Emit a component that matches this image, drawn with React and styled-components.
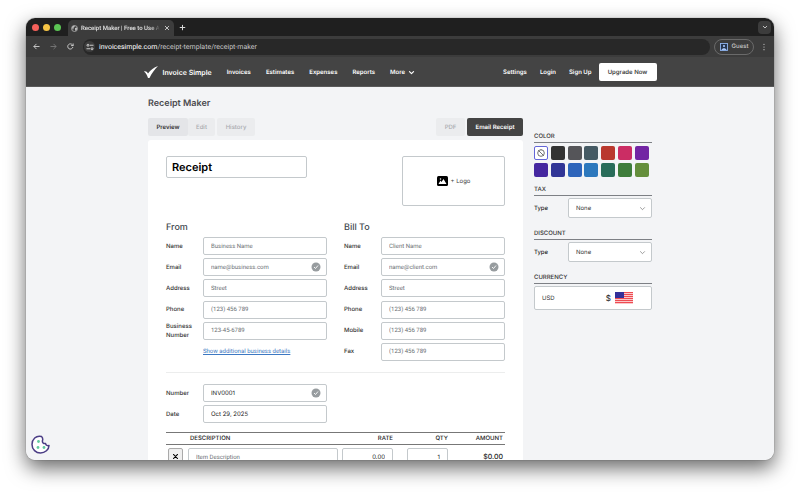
import React from "react";
import styled, { createGlobalStyle } from "styled-components";

const GlobalStyle = createGlobalStyle`
  *, *::before, *::after { box-sizing: border-box; }
  html, body { margin: 0; background: #fff; }
  body, button, input, select {
    font-family: Inter, "Liberation Sans", sans-serif;
    font-size: 6px;
    text-rendering: geometricPrecision;
  }
  button, input, select { margin: 0; padding: 0; }
  button { cursor: pointer; }
`;

const Desktop = styled.div`
  height: 100vh;
  padding: 18px 26px 34px;
  overflow: hidden;
`;

const BrowserWindow = styled.div`
  position: relative;
  height: 100%;
  display: flex;
  flex-direction: column;
  border-radius: 9px;
  box-shadow: 0 0 1px rgba(0, 0, 0, 0.7), 0 8px 20px rgba(0, 0, 0, 0.6);
`;

const Clip = styled.div`
  flex: 1;
  min-height: 0;
  display: flex;
  flex-direction: column;
  overflow: hidden;
  border-radius: 9px;
  background: #f3f4f6;
`;

const TabStrip = styled.div`
  display: flex;
  align-items: center;
  flex: none;
  height: 18px;
  padding: 0 3px 0 6px;
  background: #1f1f1f;
`;

const Lights = styled.div`
  display: flex;
  gap: 4px;
  margin-right: 7px;
`;

const Light = styled.span`
  width: 7px;
  height: 7px;
  border-radius: 50%;
  background: ${(p) => p.$color};
`;

const BrowserTab = styled.div`
  display: flex;
  align-items: center;
  align-self: flex-end;
  gap: 3px;
  width: 106px;
  height: 16px;
  padding: 0 3px;
  border-radius: 5px 5px 0 0;
  background: #3c3c3c;
  color: #e3e3e3;
`;

const TabTitle = styled.span`
  flex: 1;
  min-width: 0;
  overflow: hidden;
  white-space: nowrap;
  font-family: Roboto, sans-serif;
  font-weight: 500;
  mask-image: linear-gradient(to right, #000 88%, transparent);
`;

const ChromeButton = styled.button`
  display: flex;
  align-items: center;
  justify-content: center;
  flex: none;
  width: ${(p) => p.$size || 8}px;
  height: ${(p) => p.$size || 8}px;
  border: 0;
  border-radius: 4px;
  background: ${(p) => p.$fill || "transparent"};
  color: ${(p) => (p.$dim ? "#7a7a7a" : "#d6d6d6")};
`;

const NewTab = styled(ChromeButton)`
  margin: 0 auto 0 4px;
`;

const Toolbar = styled.div`
  display: flex;
  align-items: center;
  flex: none;
  gap: 9px;
  height: 21px;
  padding: 0 6px;
  background: #3c3c3c;
`;

const AddressBar = styled.label`
  flex: 1;
  display: flex;
  align-items: center;
  gap: 4px;
  height: 16px;
  padding: 0 1px;
  margin-right: -5px;
  border-radius: 8px;
  background: #282828;
  color: #e3e3e3;
`;

const SiteInfo = styled.span`
  display: flex;
  align-items: center;
  justify-content: center;
  width: 11px;
  height: 11px;
  border-radius: 50%;
  background: #3c3c3c;
`;

const Url = styled.span`
  font-family: Roboto, sans-serif;
  font-size: 7px;
  line-height: 10px;
  color: #c7c7c7;
  b { font-weight: 400; color: #fff; }
`;

const Guest = styled.button`
  display: flex;
  align-items: center;
  justify-content: center;
  gap: 4px;
  width: 40px;
  height: 16px;
  margin-right: -3px;
  border: 1px solid #6a6a6a;
  border-radius: 8px;
  background: transparent;
  color: #c7c7c7;
  font-weight: 500;
`;

const NavBar = styled.nav`
  flex: none;
  background: #444;
  border-bottom: 1px solid #5a5a5a;
`;

const NavInner = styled.div`
  display: flex;
  align-items: center;
  gap: 15px;
  width: 100%;
  max-width: 513px;
  height: 30px;
  margin: 0 auto -1px;
`;

const NavLink = styled.a`
  display: flex;
  align-items: center;
  gap: ${(p) => (p.$brand ? 5 : 3)}px;
  white-space: nowrap;
  text-decoration: none;
  font-weight: 600;
  font-size: ${(p) => (p.$brand ? 7 : 6)}px;
  color: #fff;
`;

const AccountLinks = styled.div`
  display: flex;
  align-items: center;
  gap: 13px;
  margin-left: auto;
`;

const Upgrade = styled.button`
  height: 18px;
  width: 58px;
  margin-left: -6px;
  border: 0;
  border-radius: 2px;
  background: #fff;
  color: #444;
  font-weight: 600;
`;

const Page = styled.main`
  display: grid;
  grid-template-columns: minmax(0, 1fr) 118px;
  column-gap: 11px;
  flex: 1;
  min-height: 0;
  width: 100%;
  max-width: 504px;
  margin: 0 auto;
  padding-top: 10px;
`;

const PageTitle = styled.h1`
  margin: 0 0 7px;
  font-size: 9px;
  line-height: 14px;
  font-weight: 600;
  color: #4b4b4f;
`;

const Actions = styled.div`
  display: flex;
  gap: 2px;
  margin-bottom: 4px;
`;

const Segments = styled.div`
  display: flex;
  margin-right: ${(p) => (p.$push ? "auto" : "0")};
`;

const Segment = styled.button`
  height: 18px;
  width: ${(p) => p.$w}px;
  border: 0;
  border-radius: 2px;
  background: ${(p) => (p.$tone === "dark" ? "#444" : p.$tone === "active" ? "#e4e5e8" : "#ebecee")};
  color: ${(p) => (p.$tone === "dark" ? "#fff" : p.$tone === "active" ? "#333" : "#a9abae")};
  font-weight: ${(p) => (p.$tone ? 600 : 500)};
`;

const Paper = styled.section`
  padding: 16px 18px;
  border-radius: 3px;
  background: #fff;
`;

const PaperTop = styled.div`
  display: flex;
  justify-content: space-between;
  align-items: flex-start;
  margin-bottom: 14px;
`;

const TextBox = styled.input`
  width: 100%;
  height: 18px;
  padding: 0 7px;
  border: 1px solid #c4c9cc;
  border-radius: 2px;
  background: #fff;
  color: #222;
  text-align: ${(p) => (p.$right ? "right" : "left")};
  &::placeholder { font-family: Roboto, sans-serif; color: #6b6f74; opacity: 1; }
`;

const TitleBox = styled(TextBox)`
  width: 141px;
  height: 22px;
  padding: 0 5px;
  font-size: 11px;
  font-weight: 600;
  color: #000;
`;

const LogoDrop = styled.button`
  display: flex;
  align-items: center;
  justify-content: center;
  gap: 3px;
  width: 103px;
  height: 50px;
  border: 1px solid #c4c9cc;
  border-radius: 2px;
  background: #fff;
  color: #444;
`;

const Columns = styled.div`
  display: grid;
  grid-template-columns: 1fr 1fr;
  column-gap: 17px;
`;

const GroupTitle = styled.h2`
  margin: 0 0 1px;
  font-size: 9px;
  line-height: 16px;
  font-weight: 500;
  color: #444a50;
`;

const FieldList = styled.div`
  display: grid;
  align-content: space-between;
  min-height: ${(p) => (p.$rows === 2 ? 39 : 124)}px;
`;

const FieldRow = styled.div`
  display: grid;
  grid-template-columns: 37px minmax(0, 1fr);
  align-items: center;
  min-height: 18px;
`;

const FieldLabel = styled.label`
  font-weight: 500;
  line-height: 9px;
  color: #333;
`;

const Overlap = styled.span`
  display: grid;
  align-items: center;
  > * { grid-area: 1 / 1; }
  > svg { justify-self: end; margin-right: 6px; pointer-events: none; }
`;

const MoreLink = styled.a`
  grid-column: 2;
  font-family: Roboto, sans-serif;
  color: #3d78c2;
  text-decoration: underline;
`;

const Divider = styled.hr`
  margin: 11px 0;
  border: 0;
  border-top: 1px solid #eceded;
`;

const Items = styled.table`
  width: 100%;
  margin-top: 9px;
  table-layout: fixed;
  border-collapse: collapse;
  th {
    height: 12px;
    padding: 0 2px;
    border-top: 1px solid #777;
    border-bottom: 1px solid #777;
    font-weight: 500;
    text-align: right;
    color: #222;
  }
  th:nth-child(2) { padding-left: 4px; text-align: left; }
  td { padding: 3px 2px 0; text-align: right; vertical-align: top; }
`;

const Col = styled.col`
  width: ${(p) => p.$w}px;
`;

const RemoveButton = styled.button`
  display: flex;
  align-items: center;
  justify-content: center;
  width: 15px;
  height: 16px;
  border: 1px solid #aaa;
  border-radius: 2px;
  background: #efefef;
`;

const QtyCell = styled.td`
  && { padding-left: 12px; }
`;

const Amount = styled.output`
  font-size: 7px;
  line-height: 18px;
  font-weight: 500;
  color: #222;
`;

const Sidebar = styled.aside`
  padding-top: 35px;
`;

const Panel = styled.section`
  margin-bottom: 8px;
`;

const PanelTitle = styled.h3`
  margin: 0 0 2px;
  height: 11px;
  border-bottom: 1px solid #7d8085;
  font-size: 6px;
  line-height: 10px;
  font-weight: 500;
  color: #333;
`;

const Swatches = styled.div`
  display: grid;
  grid-template-columns: repeat(7, 14px);
  justify-content: space-between;
  row-gap: 3px;
  padding: 1px 3px 0 0;
`;

const Swatch = styled.button`
  display: flex;
  align-items: center;
  justify-content: center;
  height: 14px;
  border: ${(p) => (p.$color ? "0" : "1px solid #6366d8")};
  border-radius: 2px;
  background: ${(p) => p.$color || "#fff"};
`;

const TypeRow = styled.div`
  display: grid;
  grid-template-columns: 34px minmax(0, 1fr);
  align-items: center;
  margin-bottom: 11px;
`;

const Picker = styled.select`
  appearance: none;
  width: 100%;
  height: 20px;
  padding: 0 7px;
  border: 1px solid #c4c9cc;
  border-radius: 2px;
  background: #fff;
  color: #333;
`;

const Currency = styled.button`
  display: flex;
  align-items: center;
  width: 100%;
  height: 24px;
  padding: 0 18px 0 7px;
  border: 1px solid #c4c9cc;
  border-radius: 2px;
  background: #fff;
  color: #333;
  svg { margin-left: 4px; }
`;

const Symbol = styled.span`
  margin-left: auto;
  font-size: 8px;
  font-weight: 500;
`;

const CookieButton = styled.button`
  position: absolute;
  left: 5px;
  bottom: 6px;
  width: 19px;
  height: 19px;
  border: 0;
  background: transparent;
`;

const Stroke = ({ size = 7, box = 24, w = 2.5, d, ...rest }) => (
  <svg width={size} height={size} viewBox={`0 0 ${box} ${box}`} fill="none" stroke="currentColor" strokeWidth={w} strokeLinecap="round" strokeLinejoin="round" aria-hidden="true" {...rest}>
    <path d={d} />
  </svg>
);

const Globe = () => (
  <svg width="7" height="7" viewBox="0 0 14 14" aria-hidden="true">
    <circle cx="7" cy="7" r="6" fill="none" stroke="#bbb" strokeWidth="1.5" />
    <path d="M2 4c2-3 5-3 6-2L6 5 4 6 6 8 3 9ZM8 6l4-1v4l-3 3-1-3Z" fill="#bbb" />
  </svg>
);

const Tune = () => (
  <svg width="8" height="8" viewBox="0 0 16 16" fill="none" stroke="#e3e3e3" strokeWidth="1.7" aria-hidden="true">
    <circle cx="4" cy="4.5" r="2" />
    <path d="M8 4.5h7M1 11.5h7" />
    <circle cx="12" cy="11.5" r="2" />
  </svg>
);

const CheckLogo = () => (
  <svg width="14" height="12" viewBox="0 0 28 24" aria-hidden="true">
    <path d="M0 11c3-1 6 0 8 4C13 8 20 3 28 0 21 7 15 15 11 24H8C6 18 4 14 0 11Z" fill="#fff" />
  </svg>
);

const CheckBadge = () => (
  <svg width="10" height="10" viewBox="0 0 20 20" aria-hidden="true">
    <circle cx="10" cy="10" r="9" fill="#979c9f" />
    <path d="m6 10 3 3 5-6" fill="none" stroke="#fff" strokeWidth="1.8" />
  </svg>
);

const Picture = () => (
  <svg width="11" height="10" viewBox="0 0 22 20" aria-hidden="true">
    <rect width="22" height="20" rx="3" fill="#000" />
    <path d="m3 16 4-7 2 3 4-6 6 10Z" fill="#fff" />
    <circle cx="7" cy="6" r="1.5" fill="#fff" />
  </svg>
);

const Flag = () => (
  <svg width="18" height="12" viewBox="0 0 36 24" aria-hidden="true">
    <rect width="36" height="24" rx="1" fill="#fff" />
    {[0, 4, 8, 12, 16, 20].map((y) => (
      <rect key={y} y={y} width="36" height="2.6" fill="#ee4b52" />
    ))}
    <rect width="18" height="12" fill="#33309a" />
  </svg>
);

const Person = () => (
  <svg width="8" height="8" viewBox="0 0 16 16" aria-hidden="true">
    <rect x="1" y="1" width="14" height="14" fill="#26364f" stroke="#8fb4f0" strokeWidth="1.8" />
    <circle cx="8" cy="6" r="2.2" fill="#a8c7fa" />
    <path d="M3 14c1-5 9-5 10 0Z" fill="#a8c7fa" />
  </svg>
);

const Cookie = () => (
  <svg width="19" height="19" viewBox="0 0 38 38" aria-hidden="true">
    <path d="M21 3C10 0 2 9 2 19s8 17 17 17 17-7 17-15c-3 1-6 0-7-4-4 1-7-2-6-6 1-3 0-6-2-8Z" fill="#fff" stroke="#4b3d85" strokeWidth="3" strokeLinejoin="round" />
    {[[15, 13], [14, 25], [26, 25]].map(([x, y]) => (
      <circle key={`${x}-${y}`} cx={x} cy={y} r="2.8" fill="#62cba0" />
    ))}
  </svg>
);

const CHEVRON = "m5 9 7 7 7-7";
const CROSS = "M5 5l14 14M19 5 5 19";

const fromFields = [
  ["Name", "Business Name"],
  ["Email", "name@business.com", true],
  ["Address", "Street"],
  ["Phone", "(123) 456 789"],
  ["Business Number", "123-45-6789"],
];
const billFields = [
  ["Name", "Client Name"],
  ["Email", "name@client.com", true],
  ["Address", "Street"],
  ["Phone", "(123) 456 789"],
  ["Mobile", "(123) 456 789"],
  ["Fax", "(123) 456 789"],
];
const colors = [
  null, "#333333", "#555559", "#455a64", "#b9382e", "#cb2d64", "#7225a3",
  "#4527a0", "#303596", "#2e65bb", "#2d78bd", "#286c59", "#3e7d3b", "#648e3b",
];

function Field({ group, label, badge, ...input }) {
  const id = `${group}-${label.toLowerCase().replace(" ", "-")}`;
  return (
    <FieldRow>
      <FieldLabel htmlFor={id}>{label}</FieldLabel>
      <Overlap>
        <TextBox id={id} {...input} />
        {badge && <CheckBadge />}
      </Overlap>
    </FieldRow>
  );
}

function Party({ title, group, fields, children }) {
  return (
    <div>
      <GroupTitle>{title}</GroupTitle>
      <FieldList>
        {fields.map(([label, placeholder, badge]) => (
          <Field key={label} group={group} label={label} placeholder={placeholder} badge={badge} />
        ))}
        {children}
      </FieldList>
    </div>
  );
}

function TypePanel({ title }) {
  const id = `${title.toLowerCase()}-type`;
  return (
    <Panel>
      <PanelTitle>{title}</PanelTitle>
      <TypeRow>
        <label htmlFor={id}>Type</label>
        <Overlap>
          <Picker id={id} defaultValue="None">
            <option>None</option>
          </Picker>
          <Stroke size={7} w={2.5} d={CHEVRON} color="#777" />
        </Overlap>
      </TypeRow>
    </Panel>
  );
}

export default function App() {
  return (
    <Desktop>
      <GlobalStyle />
      <BrowserWindow>
        <Clip>
          <TabStrip>
            <Lights>
              <Light $color="#f4605a" />
              <Light $color="#f6c445" />
              <Light $color="#5bc454" />
            </Lights>
            <BrowserTab>
              <Globe />
              <TabTitle>Receipt Maker | Free to Use A</TabTitle>
              <ChromeButton aria-label="Close tab"><Stroke size={6} w={3.5} d={CROSS} /></ChromeButton>
            </BrowserTab>
            <NewTab aria-label="New tab"><Stroke size={7} w={3.5} d="M12 4v16M4 12h16" /></NewTab>
            <ChromeButton $size={13} $fill="#3c3c3c" aria-label="Search tabs"><Stroke size={6} w={3.5} d={CHEVRON} /></ChromeButton>
          </TabStrip>
          <Toolbar>
            <ChromeButton aria-label="Back"><Stroke d="M21 12H4m7-8-8 8 8 8" w={3} /></ChromeButton>
            <ChromeButton $dim aria-label="Forward"><Stroke d="M3 12h17m-7-8 8 8-8 8" w={3} /></ChromeButton>
            <ChromeButton aria-label="Reload"><Stroke d="M20 15a9 9 0 1 1-1-8l2 2m0-6v6h-6" w={3} /></ChromeButton>
            <AddressBar>
              <SiteInfo><Tune /></SiteInfo>
              <Url><b>invoicesimple.com</b>/receipt-template/receipt-maker</Url>
            </AddressBar>
            <Guest><Person />Guest</Guest>
            <ChromeButton aria-label="Menu"><Stroke size={8} w={3.5} d="M12 4v.1M12 12v.1M12 20v.1" /></ChromeButton>
          </Toolbar>
          <NavBar>
            <NavInner>
              <NavLink href="#home" $brand><CheckLogo />Invoice Simple</NavLink>
              <NavLink href="#invoices">Invoices</NavLink>
              <NavLink href="#estimates">Estimates</NavLink>
              <NavLink href="#expenses">Expenses</NavLink>
              <NavLink href="#reports">Reports</NavLink>
              <NavLink href="#more">More <Stroke size={7} w={4} d={CHEVRON} /></NavLink>
              <AccountLinks>
                <NavLink href="#settings">Settings</NavLink>
                <NavLink href="#login">Login</NavLink>
                <NavLink href="#signup">Sign Up</NavLink>
                <Upgrade>Upgrade Now</Upgrade>
              </AccountLinks>
            </NavInner>
          </NavBar>
          <Page>
            <div>
              <PageTitle>Receipt Maker</PageTitle>
              <Actions>
                <Segments>
                  <Segment $w={40} $tone="active">Preview</Segment>
                  <Segment $w={27}>Edit</Segment>
                </Segments>
                <Segments $push><Segment $w={38}>History</Segment></Segments>
                <Segment $w={29}>PDF</Segment>
                <Segment $w={56} $tone="dark">Email Receipt</Segment>
              </Actions>
              <Paper>
                <PaperTop>
                  <TitleBox aria-label="Document title" defaultValue="Receipt" />
                  <LogoDrop><Picture />+ Logo</LogoDrop>
                </PaperTop>
                <Columns>
                  <Party title="From" group="from" fields={fromFields}>
                    <FieldRow><MoreLink href="#details">Show additional business details</MoreLink></FieldRow>
                  </Party>
                  <Party title="Bill To" group="bill" fields={billFields} />
                </Columns>
                <Divider />
                <Columns>
                  <FieldList $rows={2}>
                    <Field group="doc" label="Number" defaultValue="INV0001" badge />
                    <Field group="doc" label="Date" defaultValue="Oct 29, 2025" />
                  </FieldList>
                </Columns>
                <Items>
                  <colgroup>
                    <Col $w={20} /><Col /><Col $w={55} /><Col $w={55} /><Col $w={55} />
                  </colgroup>
                  <thead>
                    <tr><th aria-label="Remove" /><th scope="col">DESCRIPTION</th><th scope="col">RATE</th><th scope="col">QTY</th><th scope="col">AMOUNT</th></tr>
                  </thead>
                  <tbody>
                    <tr>
                      <td><RemoveButton aria-label="Remove item"><Stroke size={7} w={3.5} d={CROSS} /></RemoveButton></td>
                      <td><TextBox aria-label="Description" placeholder="Item Description" /></td>
                      <td><TextBox aria-label="Rate" defaultValue="0.00" $right /></td>
                      <QtyCell><TextBox aria-label="Quantity" defaultValue="1" $right /></QtyCell>
                      <td><Amount>$0.00</Amount></td>
                    </tr>
                  </tbody>
                </Items>
              </Paper>
            </div>
            <Sidebar>
              <Panel>
                <PanelTitle>COLOR</PanelTitle>
                <Swatches>
                  {colors.map((c) => (
                    <Swatch key={c || "none"} $color={c} aria-label={c || "No color"}>
                      {!c && <Stroke size={8} w={2.5} d="M12 2a10 10 0 1 0 0 20 10 10 0 0 0 0-20M5 5l14 14" color="#555" />}
                    </Swatch>
                  ))}
                </Swatches>
              </Panel>
              <TypePanel title="TAX" />
              <TypePanel title="DISCOUNT" />
              <Panel>
                <PanelTitle>CURRENCY</PanelTitle>
                <Currency>USD<Symbol>$</Symbol><Flag /></Currency>
              </Panel>
            </Sidebar>
          </Page>
        </Clip>
        <CookieButton aria-label="Cookie settings"><Cookie /></CookieButton>
      </BrowserWindow>
    </Desktop>
  );
}
